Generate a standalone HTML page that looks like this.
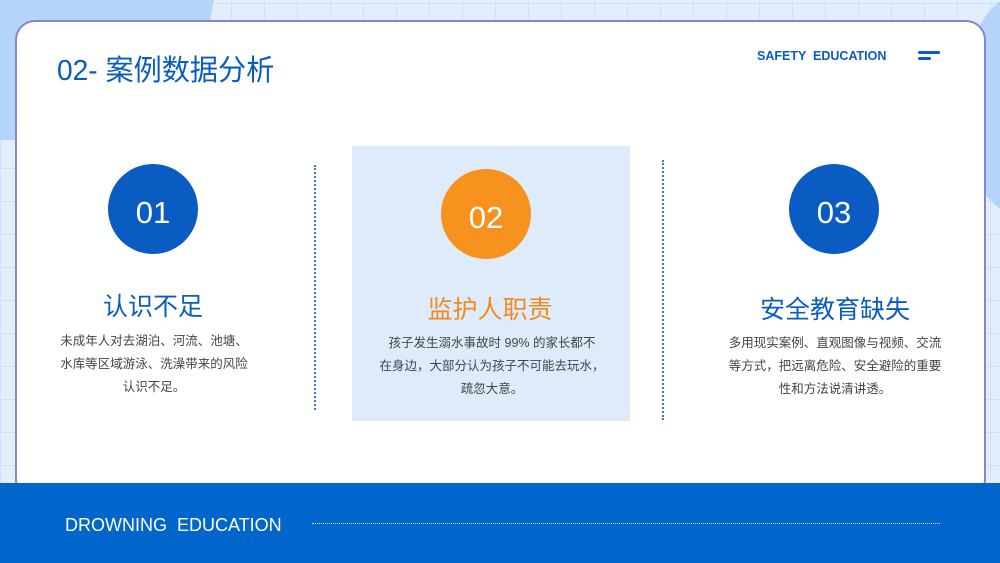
<!DOCTYPE html>
<html><head><meta charset="utf-8"><style>
*{margin:0;padding:0;box-sizing:border-box}
body{width:1000px;height:563px;position:relative;overflow:hidden;background:#e3eefc;font-family:"Liberation Sans","Noto Sans CJK SC",sans-serif}
.grid{position:absolute;inset:0;background-image:linear-gradient(#cfe0f7 1px,transparent 1px),linear-gradient(90deg,#cfe0f7 1px,transparent 1px);background-size:33px 33px;background-position:0 3px}
.blobL{position:absolute;left:-20px;top:-40px;width:225px;height:180px;background:#b5d4fa;transform:skewX(-10deg)}
.blobR{position:absolute;left:975px;top:-10px;width:120px;height:230px;background:#b5d4fa;border-radius:60px}
.card{position:absolute;left:15px;top:20px;width:971px;height:480px;background:#fff;border:2px solid #8486cf;border-radius:20px}
.bar{position:absolute;left:0;top:483px;width:1000px;height:80px;background:#0066cc}
.t{position:absolute;white-space:nowrap}
.circ{position:absolute;width:90px;height:90px;border-radius:50%;color:#fff;font-size:31px;text-align:center;line-height:98px}
.h{position:absolute;text-align:center;font-size:25px;width:280px}
.p{position:absolute;text-align:center;font-size:12.5px;line-height:23px;color:#444;width:300px}
.dl{position:absolute;width:0;border-left:2px dotted #3a7bd0}
</style></head><body>
<div class="grid"></div>
<div class="blobL"></div>
<div class="blobR"></div>
<div class="card"></div>
<div class="t" style="left:57px;top:47px;font-size:29px;color:#0a5cc2;transform:scaleX(0.97);transform-origin:left">02- 案例数据分析</div>
<div class="t" style="left:757px;top:49px;font-size:12.5px;font-weight:bold;color:#0a5cc2">SAFETY &nbsp;EDUCATION</div>
<div style="position:absolute;left:918px;top:51px;width:22px;height:3px;background:#0a5cc2;border-radius:2px"></div>
<div style="position:absolute;left:918px;top:57px;width:13px;height:3px;background:#0a5cc2;border-radius:2px"></div>
<div style="position:absolute;left:352px;top:146px;width:278px;height:275px;background:#ddebfb"></div>
<div class="dl" style="left:314px;top:165px;height:245px"></div>
<div class="dl" style="left:662px;top:160px;height:260px"></div>
<div class="circ" style="left:108px;top:164px;background:#0a5cc2">01</div>
<div class="circ" style="left:441px;top:169px;background:#f7921e">02</div>
<div class="circ" style="left:789px;top:164px;background:#0a5cc2">03</div>
<div class="h" style="left:13px;top:287px;color:#0a5cc2">认识不足</div>
<div class="h" style="left:350px;top:290px;color:#f08c1e">监护人职责</div>
<div class="h" style="left:695px;top:290px;color:#0a5cc2">安全教育缺失</div>
<div class="p" style="left:4px;top:330px">未成年人对去湖泊、河流、池塘、<br>水库等区域游泳、洗澡带来的风险<br>认识不足。</div>
<div class="p" style="left:342px;top:332px">孩子发生溺水事故时 99% 的家长都不<br>在身边，大部分认为孩子不可能去玩水，<br>疏忽大意。</div>
<div class="p" style="left:685px;top:332px">多用现实案例、直观图像与视频、交流<br>等方式，把远离危险、安全避险的重要<br>性和方法说清讲透。</div>
<div class="bar"></div>
<div class="t" style="left:65px;top:515px;font-size:18px;color:#fff">DROWNING &nbsp;EDUCATION</div>
<div style="position:absolute;left:312px;top:523px;width:628px;border-top:1px dotted #cfe0f7"></div>
</body></html>
